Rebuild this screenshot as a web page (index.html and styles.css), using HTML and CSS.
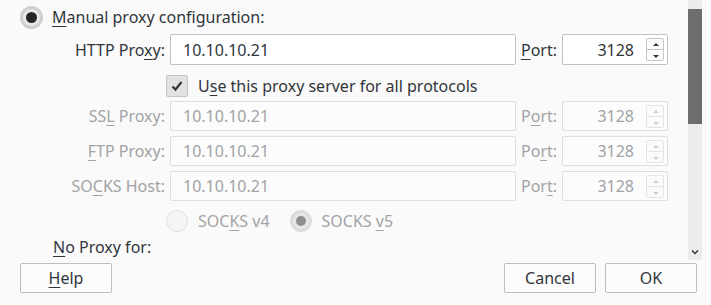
FILE: index.html
```html
<!DOCTYPE html>
<html lang="en">
    <head>
        <meta charset="UTF-8" />
        <title>Connection Settings</title>
        <link rel="stylesheet" href="styles.css">
    </head>
    <body>
        <div class="dialog">
            <div class="panel">
                <div class="content">
                    <div class="radio-row">
                        <span class="radio checked"></span>
                        <span class="text"><u>M</u>anual proxy configuration:</span>
                    </div>

                    <div class="proxy-grid">
                        <label class="lbl">HTTP Pro<u>x</u>y:</label>
                        <div class="field">10.10.10.21</div>
                        <label class="lbl port"><u>P</u>ort:</label>
                        <div class="field num">3128<span class="spin"><i class="up"></i><i class="down"></i></span></div>

                        <div class="check-row">
                            <span class="checkbox">
                                <svg width="14" height="14" viewBox="0 0 14 14"><path d="M2.5 7.5 L5.5 10.5 L11.5 3" fill="none" stroke="#31363b" stroke-width="2.2"/></svg>
                            </span>
                            <span class="text">U<u>s</u>e this proxy server for all protocols</span>
                        </div>

                        <label class="lbl off">SS<u>L</u> Proxy:</label>
                        <div class="field off">10.10.10.21</div>
                        <label class="lbl port off">P<u>o</u>rt:</label>
                        <div class="field num off">3128<span class="spin"><i class="up"></i><i class="down"></i></span></div>

                        <label class="lbl off"><u>F</u>TP Proxy:</label>
                        <div class="field off">10.10.10.21</div>
                        <label class="lbl port off">Po<u>r</u>t:</label>
                        <div class="field num off">3128<span class="spin"><i class="up"></i><i class="down"></i></span></div>

                        <label class="lbl off">SO<u>C</u>KS Host:</label>
                        <div class="field off">10.10.10.21</div>
                        <label class="lbl port off">Por<u>t</u>:</label>
                        <div class="field num off">3128<span class="spin"><i class="up"></i><i class="down"></i></span></div>

                        <div class="socks-row">
                            <span class="radio off"></span>
                            <span class="text off">SOC<u>K</u>S v4</span>
                            <span class="radio off checked"></span>
                            <span class="text off">SOCKS <u>v</u>5</span>
                        </div>
                    </div>

                    <div class="noproxy"><u>N</u>o Proxy for:</div>
                </div>
                <div class="scrollbar">
                    <div class="thumb"></div>
                    <svg class="arrow" width="8" height="6" viewBox="0 0 8 6"><path d="M1 1.5 L4 4.5 L7 1.5" fill="none" stroke="#31363b" stroke-width="1.5"/></svg>
                </div>
            </div>

            <div class="buttons">
                <button><u>H</u>elp</button>
                <span class="spacer"></span>
                <button>Cancel</button>
                <button>OK</button>
            </div>
        </div>
    </body>
</html>
```

FILE: styles.css
```css
* {
    margin: 0;
    padding: 0;
    box-sizing: border-box;
}

body {
    background: #fafafa;
    color: #31363b;
    font-family: "Noto Sans", "DejaVu Sans", sans-serif;
    font-size: 16px;
    width: 711px;
    height: 305px;
    overflow: hidden;
}

u {
    text-decoration: underline;
    text-underline-offset: 3px;
    text-decoration-thickness: 1px;
}

.panel {
    display: flex;
    height: 260px;
}

.content {
    flex: 1;
    overflow: hidden;
}

.radio-row {
    display: flex;
    align-items: center;
    gap: 9px;
    padding: 5px 0 0 20px;
    height: 29px;
}

.radio {
    width: 23px;
    height: 23px;
    border-radius: 50%;
    background: #e9e9e9;
    border: 3px solid #cfcfcf;
    position: relative;
    flex: none;
}

.radio.checked::after {
    content: "";
    position: absolute;
    left: 3px;
    top: 3px;
    width: 11px;
    height: 11px;
    border-radius: 50%;
    background: #232629;
}

.radio.off {
    background: #f5f5f5;
    border: 1px solid #e0e0e0;
    width: 22px;
    height: 22px;
}

.radio.off.checked {
    background: #e6e6e6;
    border: 3px solid #dcdcdc;
}

.radio.off.checked::after {
    background: #8e8e8e;
    left: 3px;
    top: 3px;
    width: 10px;
    height: 10px;
}

.proxy-grid {
    display: grid;
    grid-template-columns: 170px 346px 46px 106px;
    grid-template-rows: 31px 26px 30px 30px 30px 26px;
    row-gap: 5px;
    margin-top: 5px;
    align-items: center;
}

.lbl {
    text-align: right;
    padding-right: 5px;
    white-space: nowrap;
}

.lbl.port {
    text-align: left;
    padding: 0 0 0 5px;
}

.off {
    color: #a1a3a5;
}

.field {
    height: 100%;
    background: #ffffff;
    border: 1px solid #bfc1c2;
    border-radius: 2px;
    padding: 0 12px;
    display: flex;
    align-items: center;
}

.field.off {
    background: #fcfcfc;
    border-color: #dedede;
}

.field.num {
    justify-content: flex-end;
    padding-right: 3px;
}

.spin {
    display: flex;
    flex-direction: column;
    width: 18px;
    height: 23px;
    margin-left: 12px;
    border: 1px solid #c6c6c6;
    border-radius: 2px;
    background: #fbfbfb;
}

.field.off .spin {
    border-color: #e4e4e4;
}

.spin i {
    flex: 1;
    position: relative;
}

.spin i.up {
    border-bottom: 1px solid #c6c6c6;
}

.field.off .spin i.up {
    border-bottom-color: #e4e4e4;
}

.spin i::after {
    content: "";
    position: absolute;
    left: 6px;
    top: 4px;
    border-left: 3px solid transparent;
    border-right: 3px solid transparent;
}

.spin i.up::after {
    border-bottom: 3px solid #31363b;
}

.spin i.down::after {
    border-top: 3px solid #31363b;
    top: 5px;
}

.field.off .spin i.up::after {
    border-bottom-color: #cfcfcf;
}

.field.off .spin i.down::after {
    border-top-color: #cfcfcf;
}

.check-row,
.socks-row {
    grid-column: 2 / 5;
    display: flex;
    align-items: center;
    gap: 10px;
    margin-left: -4px;
}

.check-row {
    align-self: start;
    margin-top: 5px;
}

.socks-row {
    align-self: end;
}

.checkbox {
    width: 22px;
    height: 22px;
    border: 1px solid #c4c4c4;
    border-radius: 2px;
    background: #e2e2e2;
    display: flex;
    align-items: center;
    justify-content: center;
}

.socks-row .radio.off.checked {
    margin-left: 10px;
}

.noproxy {
    padding: 4px 0 0 53px;
}

.scrollbar {
    width: 14px;
    margin-right: 9px;
    background: #ececec;
    position: relative;
}

.thumb {
    margin-top: 9px;
    height: 115px;
    background: #6d6d6d;
}

.scrollbar .arrow {
    position: absolute;
    left: 3px;
    bottom: 5px;
}

.buttons {
    display: flex;
    gap: 9px;
    padding: 3px 14px 0 20px;
}

.spacer {
    flex: 1;
}

button {
    width: 92px;
    height: 30px;
    font: inherit;
    color: #31363b;
    background: #fcfcfc;
    border: 1px solid #bcbebf;
    border-radius: 2px;
}
```
